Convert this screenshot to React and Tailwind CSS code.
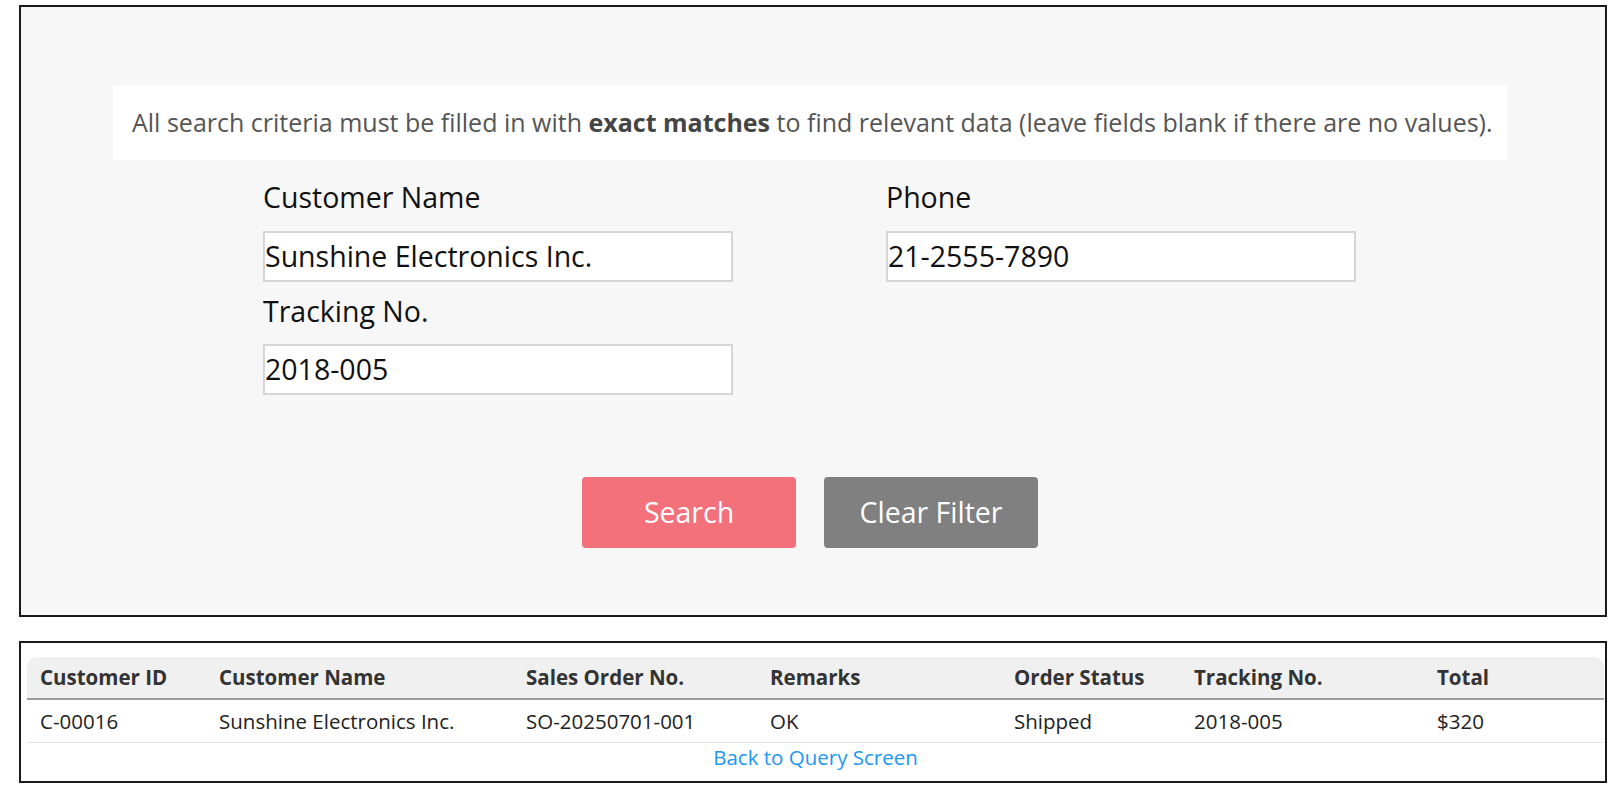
import React from "react";

const cols = "grid grid-cols-[179px_307px_244px_244px_180px_243px_1fr]";

function Field({ label, value, gap = "mt-[15px]" }) {
  return (
    <div>
      <div className="text-[28.5px] leading-[38px] text-[#111]">{label}</div>
      <div className={`${gap} h-[51px] w-[470px] border-2 border-[#d6d6d6] bg-white flex items-center text-[28.5px] text-[#111]`}>
        {value}
      </div>
    </div>
  );
}

export default function App() {
  const headers = ["Customer ID", "Customer Name", "Sales Order No.", "Remarks", "Order Status", "Tracking No.", "Total"];
  const row = ["C-00016", "Sunshine Electronics Inc.", "SO-20250701-001", "OK", "Shipped", "2018-005", "$320"];
  return (
    <div className="w-[1615px] h-[790px] bg-white pt-[5px] overflow-hidden" style={{ fontFamily: '"Open Sans", "Noto Sans", sans-serif' }}>
      <div className="ml-[19px] mr-[8px] border-2 border-[#1a1a1a] bg-[#f7f7f7] pt-[78px] pb-[67px] pl-[92px] pr-[98px]">
        <div className="h-[75px] bg-white flex items-center pl-[19px] text-[25px] text-[#555] whitespace-nowrap">
          <span>
            All search criteria must be filled in with <b className="font-bold text-[#444]">exact matches</b> to find relevant data (leave fields blank if there are no values).
          </span>
        </div>
        <div className="pl-[150px] mt-[18px]">
          <div className="flex gap-[153px]">
            <Field label="Customer Name" value="Sunshine Electronics Inc." />
            <Field label="Phone" value="21-2555-7890" />
          </div>
          <div className="mt-[10px]">
            <Field label="Tracking No." value="2018-005" gap="mt-[14px]" />
          </div>
        </div>
        <div className="mt-[82px] flex justify-center gap-[28px]">
          <button className="w-[214px] h-[71px] rounded-[4px] bg-[#f2717b] text-white text-[28.5px]">Search</button>
          <button className="w-[214px] h-[71px] rounded-[4px] bg-[#808080] text-white text-[28.5px]">Clear Filter</button>
        </div>
      </div>

      <div className="ml-[19px] mr-[8px] mt-[24px] border-2 border-[#1a1a1a] bg-white pt-[14px] pl-[6px] pr-[1px]">
        <div className={`${cols} h-[43px] items-center bg-[#f0f0f0] rounded-t-[10px] border-b-2 border-[#9c9c9c] text-[20.5px] font-bold text-[#333]`}>
          {headers.map((h) => (
            <div key={h} className="pl-[13px] whitespace-nowrap">{h}</div>
          ))}
        </div>
        <div className={`${cols} h-[43px] items-center border-b border-[#e3e3e3] text-[20.5px] text-[#222]`}>
          {row.map((c, i) => (
            <div key={i} className="pl-[13px] whitespace-nowrap">{c}</div>
          ))}
        </div>
        <div className="h-[38px] flex justify-center">
          <a href="#" className="text-[20.5px] leading-[28px] text-[#2196f3]">Back to Query Screen</a>
        </div>
      </div>
    </div>
  );
}
